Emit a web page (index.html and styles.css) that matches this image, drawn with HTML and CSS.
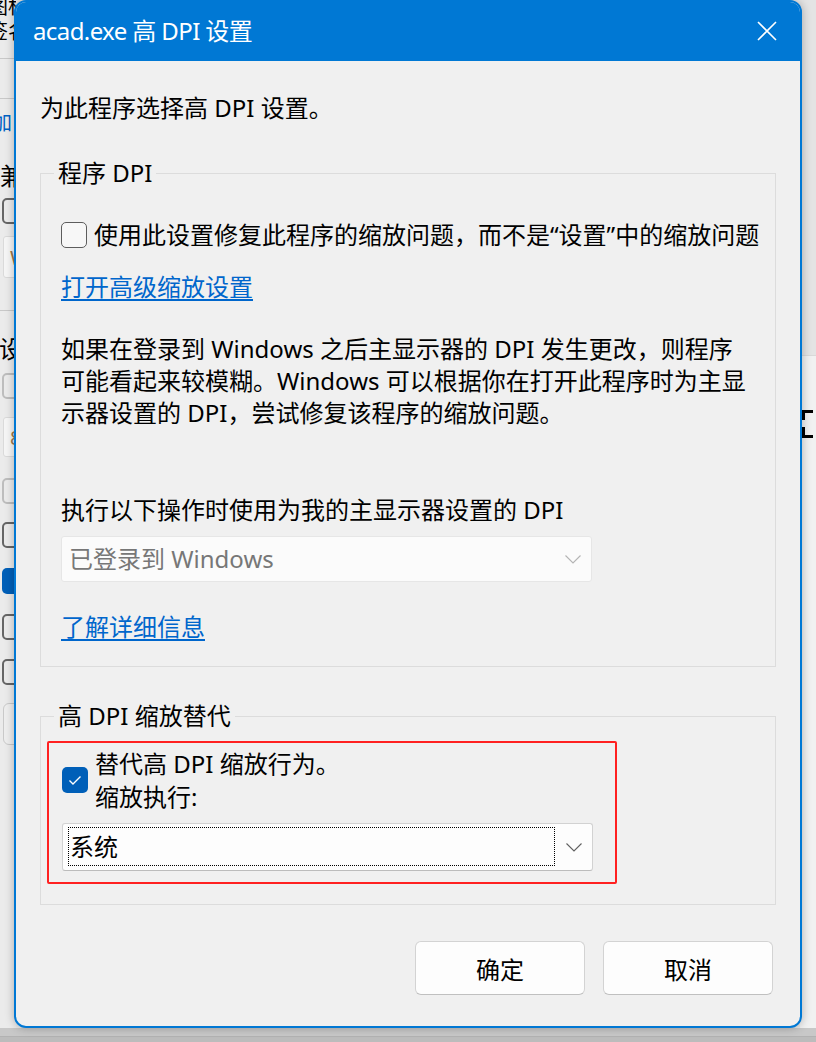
FILE: index.html
```html
<!DOCTYPE html>
<html lang="zh-CN">
<head>
<meta charset="utf-8">
<title>acad.exe 高 DPI 设置</title>
<link rel="stylesheet" href="styles.css">
</head>
<body>
<div class="desk">
  <div class="bgwin-left">
    <div class="bl-text">图标</div>
    <div class="bl-text second">签名</div>
    <div class="bl-rule r1"></div>
    <div class="bl-rule r2"></div>
    <div class="bl-blue">加</div>
    <div class="bl-char c1">兼</div>
    <div class="bl-cb dark m8"></div>
    <div class="bl-select s1"><span>W</span></div>
    <div class="bl-rule r3"></div>
    <div class="bl-char c2">设</div>
    <div class="bl-cb faint m12"></div>
    <div class="bl-select s2"><span>8</span></div>
    <div class="bl-cb faint m21"></div>
    <div class="bl-cb dark m18"></div>
    <div class="bl-cb blue m20"></div>
    <div class="bl-cb dark m20"></div>
    <div class="bl-cb dark m19"></div>
    <div class="bl-btn"></div>
  </div>

  <div class="bgwin-right">
    <div class="br-top"></div>
    <div class="br-bracket top"></div>
    <div class="br-bracket bottom"></div>
  </div>

  <div class="bgbottom">
    <div class="bb-line"></div>
  </div>

  <div class="dialog">
    <div class="titlebar">
      <span class="title">acad.exe 高 DPI 设置</span>
      <svg class="close" width="20" height="20" viewBox="0 0 20 20" aria-hidden="true">
        <path d="M1 1 L19 19 M19 1 L1 19" stroke="#ffffff" stroke-width="1.6" fill="none"/>
      </svg>
    </div>

    <div class="dbody">
      <p class="intro">为此程序选择高 DPI 设置。</p>

      <fieldset class="group g1">
        <legend>程序 DPI</legend>
        <div class="ginner">
          <label class="check-row">
            <span class="cb"></span>
            <span class="cb-label">使用此设置修复此程序的缩放问题，而不是“设置”中的缩放问题</span>
          </label>
          <a class="link l1" href="#">打开高级缩放设置</a>
          <p class="para">如果在登录到 Windows 之后主显示器的 DPI 发生更改，则程序<br>可能看起来较模糊。Windows 可以根据你在打开此程序时为主显<br>示器设置的 DPI，尝试修复该程序的缩放问题。</p>
          <p class="when">执行以下操作时使用为我的主显示器设置的 DPI</p>
          <div class="select disabled">
            <span class="sel-text">已登录到 Windows</span>
            <svg class="chev" width="16" height="9" viewBox="0 0 16 9" aria-hidden="true"><path d="M0.5 0.5 L8 8 L15.5 0.5" stroke="#b4b4b4" stroke-width="1.1" fill="none"/></svg>
          </div>
          <a class="link l2" href="#">了解详细信息</a>
        </div>
      </fieldset>

      <fieldset class="group g2">
        <legend>高 DPI 缩放替代</legend>
        <div class="redbox">
          <div class="check-row2">
            <span class="cb checked">
              <svg width="26" height="26" viewBox="0 0 26 26" aria-hidden="true"><path d="M7.5 13.5 L11 17 L18.5 9.5" stroke="#ffffff" stroke-width="1.4" fill="none"/></svg>
            </span>
            <div class="lbl2">
              <div>替代高 DPI 缩放行为。</div>
              <div>缩放执行:</div>
            </div>
          </div>
          <div class="select active">
            <span class="focus">系统</span>
            <svg class="chev" width="16" height="9" viewBox="0 0 16 9" aria-hidden="true"><path d="M0.5 0.5 L8 8 L15.5 0.5" stroke="#606060" stroke-width="1.1" fill="none"/></svg>
          </div>
        </div>
      </fieldset>

      <div class="buttons">
        <button class="btn">确定</button>
        <button class="btn">取消</button>
      </div>
    </div>
  </div>
</div>
</body>
</html>
```

FILE: styles.css
```css
* { box-sizing: border-box; }

html, body {
  margin: 0;
  padding: 0;
}

body {
  width: 816px;
  height: 1042px;
  overflow: hidden;
  font-family: "Noto Sans", "Noto Sans CJK SC", sans-serif;
  font-size: 24px;
  color: #000;
  background: #e9e9e9;
}

.desk {
  position: relative;
  width: 816px;
  height: 1042px;
  overflow: hidden;
}

/* ---------- background window (left) ---------- */
.bgwin-left {
  position: absolute;
  left: 0;
  top: 0;
  width: 16px;
  height: 1030px;
  overflow: hidden;
  background: #ebebeb;
}

.bl-text {
  margin-left: -12px;
  font-size: 20px;
  line-height: 22px;
  height: 22px;
  white-space: nowrap;
  color: #000;
}
.bl-text:first-child { margin-top: -4px; }
.bl-text.second { margin-top: 3px; }

.bl-rule {
  height: 1px;
  background: #c8c8c8;
}
.bl-rule.r1 { margin-top: 15px; }
.bl-rule.r2 { margin-top: 39px; }
.bl-rule.r3 { margin-top: 32px; }

.bl-blue {
  margin-top: 13px;
  margin-left: -8px;
  font-size: 20px;
  line-height: 22px;
  color: #0063c4;
}

.bl-char {
  margin-left: 0;
  font-size: 24px;
  white-space: nowrap;
}
.bl-char.c1 { margin-top: 28px; line-height: 28px; }
.bl-char.c2 { margin-top: 26px; line-height: 24px; margin-left: -1px; }

.bl-cb {
  width: 26px;
  height: 26px;
  margin-left: 2px;
  border-radius: 5px;
  border: 2px solid #666;
}
.bl-cb.faint { border-color: #bdbdbd; }
.bl-cb.blue { border: 0; background: #005fb8; }
.bl-cb.m8 { margin-top: 8px; }
.bl-cb.m12 { margin-top: 12px; }
.bl-cb.m18 { margin-top: 18px; }
.bl-cb.m19 { margin-top: 19px; }
.bl-cb.m20 { margin-top: 20px; }
.bl-cb.m21 { margin-top: 21px; }

.bl-select {
  margin-left: 3px;
  width: 40px;
  border: 1px solid #dadada;
  border-radius: 3px;
  background: #f6f6f6;
  font-size: 20px;
  padding-left: 6px;
  color: #a0784a;
  display: flex;
  align-items: center;
}
.bl-select.s1 { margin-top: 12px; height: 42px; }
.bl-select.s2 { margin-top: 18px; height: 40px; }

.bl-btn {
  margin-top: 18px;
  margin-left: 3px;
  width: 60px;
  height: 42px;
  border: 1px solid #c9c9c9;
  border-radius: 6px;
  background: #eeeeee;
}

/* ---------- background window (right) ---------- */
.bgwin-right {
  position: absolute;
  left: 800px;
  top: 0;
  width: 16px;
  height: 1030px;
  background: #f1f1f1;
}

.br-top {
  height: 356px;
  background: #e4e4e4;
  border-bottom: 1px solid #d9d9d9;
}

.br-bracket {
  width: 11px;
  margin-left: 2px;
  border-left: 3px solid #000;
}
.br-bracket.top {
  margin-top: 54px;
  height: 10px;
  border-top: 3px solid #000;
}
.br-bracket.bottom {
  margin-top: 7px;
  height: 11px;
  border-bottom: 3px solid #000;
}

/* ---------- bottom strip ---------- */
.bgbottom {
  position: absolute;
  left: 0;
  top: 1028px;
  width: 816px;
  height: 14px;
  background: #c8c8c8;
}
.bb-line {
  margin-top: 8px;
  height: 6px;
  background: #bcbcbc;
  border-top: 1px solid #b2b2b2;
}

/* ---------- dialog ---------- */
.dialog {
  position: absolute;
  left: 14px;
  top: 0;
  width: 788px;
  height: 1028px;
  background: #f0f0f0;
  border: 2px solid #0078d4;
  border-radius: 12px;
  overflow: hidden;
  box-shadow: 0 0 10px rgba(0, 0, 0, 0.28);
  display: flex;
  flex-direction: column;
}

.titlebar {
  flex: 0 0 59px;
  background: #0078d4;
  display: flex;
  align-items: center;
  justify-content: space-between;
  padding-left: 17px;
  padding-right: 23px;
  color: #fff;
}

.title {
  font-size: 24px;
  line-height: 32px;
  margin-top: -2px;
  letter-spacing: -0.6px;
  white-space: nowrap;
}

.close {
  display: block;
  margin-top: -2px;
}

.dbody {
  flex: 1;
  padding: 31px 24px 0 24px;
}

.intro {
  margin: 0;
  line-height: 32px;
  white-space: nowrap;
}

.group {
  margin: 33px 0 0 0;
  padding: 0;
  border: 1px solid #dcdcdc;
  min-width: 0;
}

.group legend {
  margin-left: 13px;
  padding: 0 4px;
  line-height: 32px;
  white-space: nowrap;
}

.ginner {
  padding: 30px 0 23px 20px;
}

.check-row {
  display: flex;
  align-items: center;
  height: 32px;
  gap: 7px;
  white-space: nowrap;
}

.cb {
  flex: 0 0 26px;
  width: 26px;
  height: 26px;
  border: 1.5px solid #5d5d5d;
  border-radius: 5px;
  background: #f7f7f7;
  display: block;
}

.cb.checked {
  border: 0;
  background: #005fb8;
}
.cb.checked svg { display: block; }

.cb-label {
  line-height: 32px;
}

.link {
  display: block;
  width: max-content;
  color: #0066cc;
  text-decoration: underline;
  text-underline-offset: 3px;
  line-height: 32px;
  white-space: nowrap;
}
.link.l1 { margin-top: 20px; }
.link.l2 { margin-top: 29px; }

.para {
  margin: 30px 0 0 0;
  line-height: 32px;
  white-space: nowrap;
}

.when {
  margin: 65px 0 0 0;
  line-height: 32px;
  white-space: nowrap;
}

.select {
  display: flex;
  align-items: center;
  justify-content: space-between;
  width: 531px;
  border-radius: 3px;
  padding-right: 10px;
}

.select.disabled {
  margin-top: 10px;
  height: 46px;
  background: #fbfbfb;
  border: 1px solid #e6e6e6;
  padding-left: 7px;
}

.sel-text {
  color: #777;
  line-height: 32px;
  white-space: nowrap;
}

.chev { display: block; flex: 0 0 16px; }

/* ---------- override group ---------- */
.redbox {
  margin: 9px 0 20px 6px;
  width: 570px;
  border: 2px solid #ff2121;
  border-radius: 2px;
  padding: 4px 0 11px 13px;
}

.check-row2 {
  display: flex;
  align-items: center;
  gap: 7px;
}

.lbl2 div {
  line-height: 33px;
  white-space: nowrap;
}

.select.active {
  margin-top: 10px;
  height: 48px;
  background: #fdfdfd;
  border: 1px solid #d2d2d2;
  border-bottom-color: #bcbcbc;
  padding-left: 5px;
}

.focus {
  display: flex;
  align-items: center;
  width: 487px;
  height: 39px;
  border: 1px dotted #000;
  padding-left: 1px;
  line-height: 32px;
  margin-top: -1px;
}

/* ---------- buttons ---------- */
.buttons {
  display: flex;
  justify-content: flex-end;
  gap: 18px;
  margin-top: 36px;
  padding-right: 3px;
}

.btn {
  width: 170px;
  height: 54px;
  font-family: inherit;
  font-size: 24px;
  color: #000;
  background: #fdfdfd;
  border: 1px solid #d3d3d3;
  border-bottom-color: #c0c0c0;
  border-radius: 6px;
  padding: 0;
}
```
